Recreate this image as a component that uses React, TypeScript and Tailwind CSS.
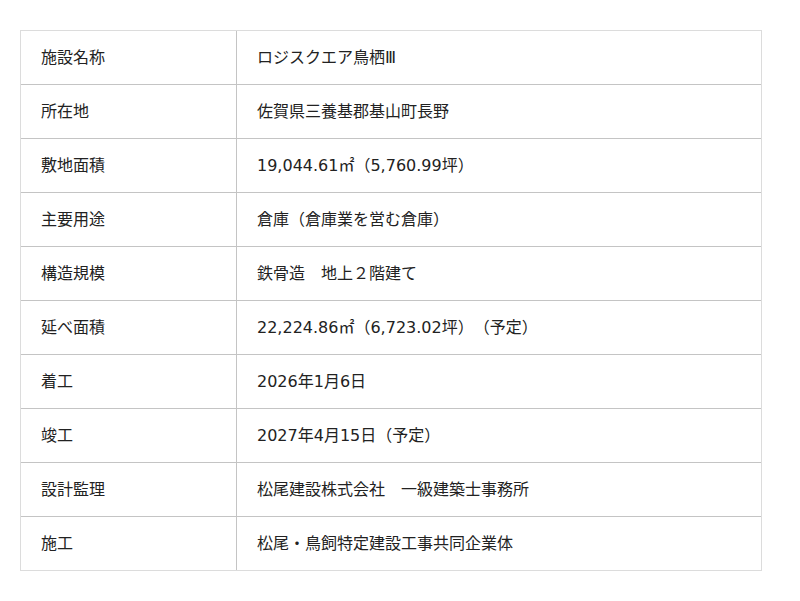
const rows: [string, string][] = [
  ['施設名称', 'ロジスクエア鳥栖Ⅲ'],
  ['所在地', '佐賀県三養基郡基山町長野'],
  ['敷地面積', '19,044.61㎡（5,760.99坪）'],
  ['主要用途', '倉庫（倉庫業を営む倉庫）'],
  ['構造規模', '鉄骨造　地上２階建て'],
  ['延べ面積', '22,224.86㎡（6,723.02坪）（予定）'],
  ['着工', '2026年1月6日'],
  ['竣工', '2027年4月15日（予定）'],
  ['設計監理', '松尾建設株式会社　一級建築士事務所'],
  ['施工', '松尾・鳥飼特定建設工事共同企業体'],
]

export default function App() {
  return (
    <div
      className="w-[800px] h-[601px] bg-white pt-[30px] pl-[20px] [text-spacing-trim:space-all]"
      style={{ fontFamily: '"DejaVu Sans", "Noto Sans CJK JP", sans-serif' }}
    >
      <div className="w-[742px] border border-[#dcdcdc]">
        {rows.map(([label, value], i) => (
          <div
            key={label}
            className={
              i < rows.length - 1
                ? 'flex h-[54px] border-b border-[#c4c4c4]'
                : 'flex h-[53px]'
            }
          >
            <div className="w-[216px] shrink-0 border-r border-[#c4c4c4] pl-[20px] flex items-center text-[16px] text-[#222]">
              {label}
            </div>
            <div className="flex-1 pl-[20px] flex items-center text-[16px] text-[#222]">
              {value}
            </div>
          </div>
        ))}
      </div>
    </div>
  )
}
